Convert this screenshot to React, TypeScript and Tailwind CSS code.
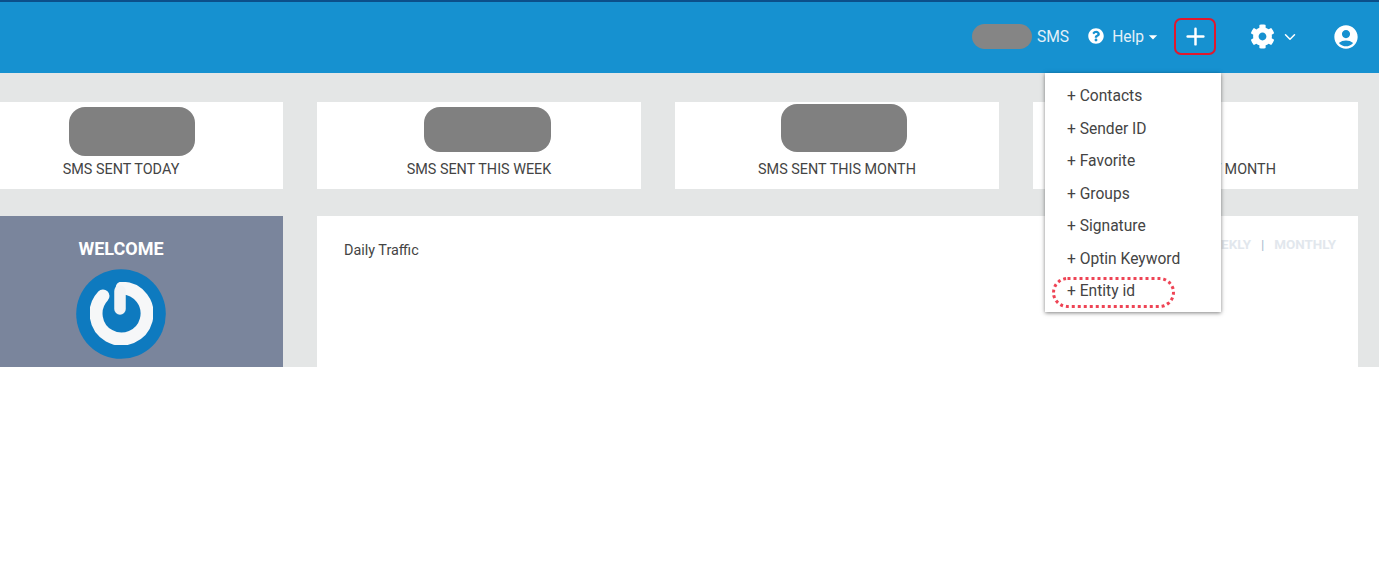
import { ChevronDown, Plus } from "lucide-react"
import { FaCog, FaQuestionCircle } from "react-icons/fa"
import { MdAccountCircle, MdArrowDropDown } from "react-icons/md"

const menuItems = ["Contacts", "Sender ID", "Favorite", "Groups", "Signature", "Optin Keyword", "Entity id"]

const Header = () => (
  <header className="flex h-[73px] items-center border-t-2 border-[#0b4f8a] bg-[#1691d0] pb-[2px] text-white">
    <div className="ml-[972px] h-[25px] w-[60px] rounded-[13px] bg-[#858585]" />
    <span className="mt-[2px] ml-[5px] text-[15.6px] text-[#e3f0f8]">SMS</span>
    <FaQuestionCircle className="mb-[2px] ml-[19px] size-[16px]" />
    <span className="mt-[2px] ml-[8px] text-[15.6px] text-[#e3f0f8]">Help</span>
    <MdArrowDropDown className="ml-[-1px] size-[20px]" />
    <button className="ml-[11px] flex h-[37px] w-[42px] items-center justify-center rounded-[7px] border-2 border-[#e0182d]">
      <Plus className="size-[27px]" strokeWidth={2.2} />
    </button>
    <FaCog className="ml-[34px] size-[25px]" />
    <ChevronDown className="ml-[6px] size-[18px]" />
    <MdAccountCircle className="ml-[33px] size-[28px]" />
  </header>
)

const StatCard = ({ label, blobClass, wide }: { label: string; blobClass: string; wide?: boolean }) => (
  <div className={`flex h-[87px] shrink-0 flex-col items-center bg-white ${wide ? "w-[325px]" : "w-[324px]"}`}>
    <div className={`rounded-[16px] bg-[#808080] ${blobClass}`} />
    <p className="mt-auto mb-[11px] text-[14.4px] leading-[16px] text-[#444]">{label}</p>
  </div>
)

const PowerLogo = () => (
  <svg viewBox="0 0 90 90" className="mt-[11px] size-[90px]">
    <defs>
      <filter id="soft" x="-10%" y="-10%" width="120%" height="120%">
        <feGaussianBlur stdDeviation="0.6" />
      </filter>
    </defs>
    <circle cx="45" cy="45" r="44.8" fill="#0e7abf" />
    <g fill="none" strokeLinecap="round" filter="url(#soft)">
      <path d="M27 27 A25.5 25.5 0 1 0 46 19" stroke="#f6f7f8" strokeWidth="13" />
      <path d="M44 22 V40" stroke="#f1f3f5" strokeWidth="11.5" />
    </g>
  </svg>
)

const Dropdown = () => (
  <div className="absolute top-[73px] left-[1045px] h-[239px] w-[176px] bg-white pt-[7px] pl-[22px] shadow-[0_1px_4px_rgba(0,0,0,0.5)]">
    {menuItems.map((item) => (
      <div key={item} className="h-[32.5px] text-[15.6px] leading-[32.5px] text-[#444]">
        + {item}
      </div>
    ))}
    <div className="absolute top-[204px] left-[7px] h-[31px] w-[123px] rounded-full border-[3px] border-dotted border-[#ee4455]" />
  </div>
)

export default function App() {
  return (
    <div className="relative h-[574px] w-[1379px] overflow-hidden bg-white font-['Roboto',sans-serif]">
      <Header />
      <main className="ml-[-41px] h-[294px] overflow-hidden bg-[#e4e6e6] pt-[29px]">
        <div className="flex gap-[34px]">
          <StatCard label="SMS SENT TODAY" blobClass="mt-[5px] ml-[22px] h-[49px] w-[126px]" />
          <StatCard label="SMS SENT THIS WEEK" blobClass="mt-[5px] ml-[16px] h-[45px] w-[127px]" />
          <StatCard label="SMS SENT THIS MONTH" blobClass="mt-[2px] ml-[14px] h-[48px] w-[126px]" />
          <StatCard label="SMS SENT LAST MONTH" blobClass="h-0 w-0" wide />
        </div>
        <div className="mt-[27px] flex gap-[34px]">
          <section className="flex h-[160px] w-[324px] shrink-0 flex-col items-center bg-[#7a859c] pt-[23px]">
            <h2 className="text-[18px] leading-[19px] font-bold text-white">WELCOME</h2>
            <PowerLogo />
          </section>
          <section className="flex h-[160px] w-[1041px] shrink-0 items-start justify-between bg-white pt-[27px] pr-[22px] pl-[27px]">
            <span className="text-[14.4px] leading-[16px] text-[#444]">Daily Traffic</span>
            <div className="mt-[-5px] flex gap-[10px] text-[13.4px] leading-[14px] font-bold text-[#e2e7ed]">
              <span>WEEKLY</span>
              <span className="font-normal text-[#a9bccf]">|</span>
              <span>MONTHLY</span>
            </div>
          </section>
        </div>
      </main>
      <Dropdown />
    </div>
  )
}
